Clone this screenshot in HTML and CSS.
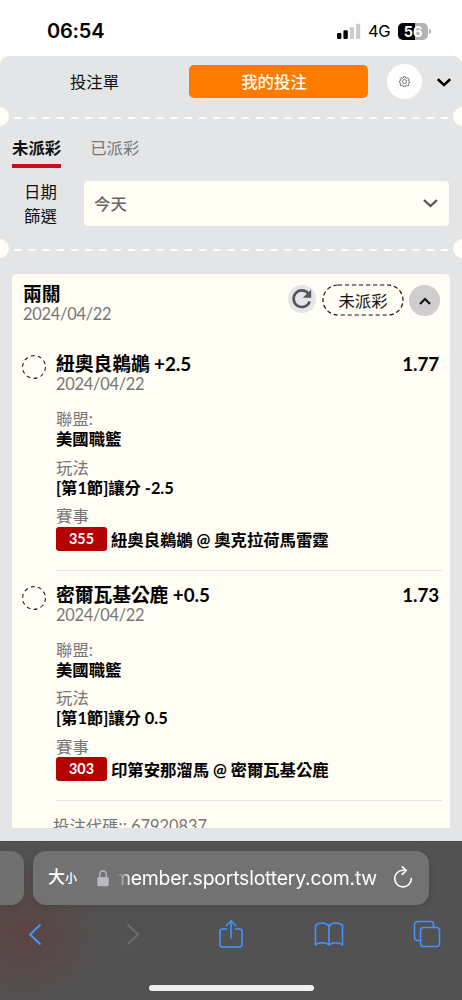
FILE: index.html
```html
<!DOCTYPE html>
<html lang="zh-Hant">
<head>
<meta charset="utf-8">
<title>我的投注</title>
<link rel="stylesheet" href="styles.css">
</head>
<body>
<div class="screen">
  <header class="status">
    <span class="clock">06:54</span>
    <div class="status-right">
      <svg class="signal" width="24" height="16" viewBox="0 0 24 16"><rect x="0" y="10" width="4.4" height="6" rx="1.2" fill="#000"/><rect x="6.4" y="7.3" width="4.4" height="8.7" rx="1.2" fill="#000"/><rect x="12.8" y="4" width="4.2" height="12" rx="1.2" fill="#ccc"/><rect x="19" y="0.8" width="4.2" height="15.2" rx="1.2" fill="#ccc"/></svg>
      <span class="network">4G</span>
      <div class="battery"><span class="battery-body"><b>5</b><b>6</b></span><i class="battery-tip"></i></div>
    </div>
  </header>

  <main class="page">
    <nav class="switcher">
      <span class="switch">投注單</span>
      <span class="switch switch-on">我的投注</span>
      <span class="gear"><svg width="11" height="11" viewBox="0 0 24 24" fill="none" stroke="#555" stroke-width="1.8"><circle cx="12" cy="12" r="4.3"/><path d="M10 1.500h4l.7 2.700 2 .9 2.700-1.700 2.300 2.300-1.700 2.700.9 2 2.600.7v3l-2.600.7-.9 2 1.700 2.700-2.300 2.300-2.700-1.700-2 .9-.7 2.600h-4l-.7-2.600-2-.9-2.700 1.700-2.300-2.300 1.700-2.700-.9-2-2.600-.7v-3l2.600-.7.9-2-1.700-2.700 2.300-2.300 2.700 1.700 2-.9z"/></svg></span>
      <svg class="collapse" width="14" height="9" viewBox="0 0 14 9" fill="none" stroke="#000" stroke-width="2.5"><path d="M.8 1.200 7 7l6.200-5.800"/></svg>
    </nav>

    <div class="perforation"><i></i><svg width="434" height="2" viewBox="0 0 434 2"><path d="M0 1h434" stroke="#fffdf4" stroke-width="2" stroke-dasharray="7.300 6.930"/></svg><i></i></div>

    <section class="filters">
      <div class="tabs"><span class="tab tab-on">未派彩</span><span class="tab">已派彩</span></div>
      <div class="date-filter">
        <label class="date-label">日期<br>篩選</label>
        <div class="select"><span>今天</span><svg width="15" height="9" viewBox="0 0 15 9" fill="none" stroke="#555" stroke-width="2.300"><path d="M1 1l6.500 6L14 1"/></svg></div>
      </div>
    </section>

    <div class="perforation"><i></i><svg width="434" height="2" viewBox="0 0 434 2"><path d="M0 1h434" stroke="#fffdf4" stroke-width="2" stroke-dasharray="7.300 6.930"/></svg><i></i></div>

    <article class="card">
      <div class="card-head">
        <div class="card-name"><h2 class="title">兩關</h2><p class="date">2024/04/22</p></div>
        <span class="refresh"><svg width="22" height="22" viewBox="0 0 22 22"><path d="M17.300 5.400A8.300 8.300 0 1 0 18.700 13.500" fill="none" stroke="#55565a" stroke-width="2.600"/><path d="M20.200 1.500v8.300h-8.300z" fill="#55565a"/></svg></span>
        <span class="pill"><svg width="82" height="32" viewBox="0 0 82 32"><rect x="1" y="1" width="80" height="30" rx="15" fill="none" stroke="#111" stroke-width="1.200" stroke-dasharray="4.200 2.800"/></svg><em>未派彩</em></span>
        <span class="toggle"><svg width="12" height="8" viewBox="0 0 12 8" fill="none" stroke="#111" stroke-width="2.200"><path d="M1 7l5-5 5 5"/></svg></span>
      </div>

      <section class="leg">
        <svg class="ring" width="24" height="24" viewBox="0 0 24 24"><circle cx="12" cy="12" r="11.400" fill="none" stroke="#222" stroke-width="1.100" stroke-dasharray="3.800 3.363"/></svg>
        <div class="leg-body">
          <div class="leg-head"><h3 class="title">紐奧良鵜鶘 +2.5</h3><b class="odds">1.77</b></div>
          <p class="date">2024/04/22</p>
          <dl class="facts">
            <div><dt>聯盟:</dt><dd>美國職籃</dd></div>
            <div><dt>玩法</dt><dd>[第1節]讓分 -2.5</dd></div>
            <div><dt>賽事</dt><dd class="match"><span class="code">355</span><span class="teams">紐奧良鵜鶘 @ 奧克拉荷馬雷霆</span></dd></div>
          </dl>
        </div>
      </section>

      <section class="leg">
        <svg class="ring" width="24" height="24" viewBox="0 0 24 24"><circle cx="12" cy="12" r="11.400" fill="none" stroke="#222" stroke-width="1.100" stroke-dasharray="3.800 3.363"/></svg>
        <div class="leg-body">
          <div class="leg-head"><h3 class="title">密爾瓦基公鹿 +0.5</h3><b class="odds">1.73</b></div>
          <p class="date">2024/04/22</p>
          <dl class="facts">
            <div><dt>聯盟:</dt><dd>美國職籃</dd></div>
            <div><dt>玩法</dt><dd>[第1節]讓分 0.5</dd></div>
            <div><dt>賽事</dt><dd class="match"><span class="code">303</span><span class="teams">印第安那溜馬 @ 密爾瓦基公鹿</span></dd></div>
          </dl>
        </div>
      </section>
      <p class="ticket">投注代碼:: 67920837</p>
    </article>
  </main>

  <footer class="browser">
    <div class="address-row">
      <div class="prev-tab"></div>
      <div class="address">
        <span class="text-size">大<small>小</small></span>
        <svg class="lock" width="12" height="17" viewBox="0 0 12 17"><rect x="0.300" y="7" width="11.400" height="9.300" rx="1.600" fill="#bab8bf"/><path d="M2.700 8V4.500a3.300 3.500 0 0 1 6.600 0V8" fill="none" stroke="#bab8bf" stroke-width="1.400"/></svg>
        <span class="url">member.sportslottery.com.tw</span>
        <svg class="reload" width="20" height="24" viewBox="0 0 20 24" fill="none" stroke="#fff" stroke-width="1.600" stroke-linecap="round" stroke-linejoin="round"><path d="M10.800 5.300H10a8.300 8.300 0 1 0 8.300 8.300M9.300 1.800l4 3.700-4 3.800"/></svg>
      </div>
    </div>
    <div class="tools">
      <svg width="14" height="23" viewBox="0 0 14 23" stroke="#4692ff" stroke-width="2"><path d="M12.500 1.500 2 11.500l10.500 10"/></svg>
      <svg width="14" height="23" viewBox="0 0 14 23" stroke="#747474" stroke-width="1.600"><path d="M1.500 1.500 12 11.500l-10.500 10"/></svg>
      <svg width="26" height="30" viewBox="0 0 26 30" stroke="#4692ff" stroke-width="1.600"><path d="M9 10H4.500A2.500 2.500 0 0 0 2 12.500v13A2.500 2.500 0 0 0 4.500 28h17a2.500 2.500 0 0 0 2.500-2.500v-13a2.500 2.500 0 0 0-2.500-2.500H17M13 19.500V2M7.800 7 13 1.800 18.200 7"/></svg>
      <svg width="30" height="26" viewBox="0 0 30 26" stroke="#4692ff" stroke-width="1.600" stroke-linejoin="round"><path d="M15 5C12 1 4.500 1 1.500 4.500V24C5 21 12 21 15 24c3-3 10-3 13.500 0V4.500C25.500 1 18 1 15 5zM15 5v19"/></svg>
      <svg width="28" height="28" viewBox="0 0 28 28" stroke="#4692ff" stroke-width="1.600"><path d="M7.500 20.500h-3A3 3 0 0 1 1.500 17.500V4.500a3 3 0 0 1 3-3h13a3 3 0 0 1 3 3v3"/><rect x="7.500" y="7.500" width="19" height="19" rx="3"/></svg>
    </div>
    <div class="home-bar"></div>
  </footer>
</div>
</body>
</html>
```
FILE: styles.css
```css
* { box-sizing: border-box; }
body, h2, h3, p, dl, dd { margin: 0; }
body {
  width: 462px;
  height: 1000px;
  overflow: hidden;
  background: #fff;
  font: 16.4px/20px Lato, "Noto Sans CJK TC", sans-serif;
  color: #111;
}
svg { display: block; flex: none; }
.screen { display: flex; flex-direction: column; height: 1000px; background: #fffdf4; }

.status {
  display: flex;
  justify-content: space-between;
  align-items: center;
  height: 56px;
  padding: 6px 31px 0 47px;
  background: #fff;
  font-family: Inter, sans-serif;
  color: #000;
}
.clock { font-size: 20px; font-weight: 600; letter-spacing: -.2px; }
.status-right { display: flex; align-items: center; }
.signal { margin-right: 7px; }
.network { width: 30px; font-size: 16.5px; font-weight: 400; letter-spacing: -.3px; }
.battery { display: flex; align-items: center; gap: 1px; }
.battery-body {
  display: flex;
  justify-content: center;
  align-items: center;
  width: 30px;
  height: 17px;
  border-radius: 5px;
  background: linear-gradient(90deg, #000 56%, #b3b3b3 56%);
  color: #fff;
  font-size: 14.5px;
  line-height: 17px;
}
.battery-tip { width: 2px; height: 5px; border-radius: 0 2px 2px 0; background: #b3b3b3; }

.page {
  height: 785px;
  overflow: hidden;
  border-radius: 9px 9px 0 0;
  background: #e3e5e7;
}
.switcher { display: flex; align-items: center; height: 51px; }
.switch { width: 189px; text-align: center; line-height: 33px; }
.switch-on { width: 179px; padding-right: 9px; border-radius: 5px; background: #ff7a00; color: #fffdf4; font-weight: 500; }
.gear {
  display: grid;
  place-items: center;
  width: 35px;
  height: 35px;
  margin-left: 19px;
  border-radius: 50%;
  background: #fff;
}
.collapse { margin: 1px 0 0 15px; }

.perforation { display: flex; align-items: center; justify-content: space-between; height: 19px; margin: 0 -10px; }
.perforation i { width: 19px; height: 19px; border-radius: 50%; background: #fffdf4; }
.perforation svg { margin-top: 2px; }

.filters { height: 113px; padding: 12px 13px 0 12px; }
.tabs { display: flex; gap: 29px; height: 30px; line-height: 20px; }
.tab { color: #777; }
.tab-on { height: 30px; border-bottom: 4px solid #c1121a; color: #111; font-weight: 700; }
.date-filter { display: flex; justify-content: space-between; align-items: center; height: 45px; margin-top: 13px; }
.date-label { width: 57px; line-height: 24px; text-align: center; }
.select {
  display: flex;
  justify-content: space-between;
  align-items: center;
  width: 365px;
  height: 45px;
  padding: 0 11px 0 10px;
  border-radius: 4px;
  background: #fffdf4;
  color: #666;
  font-weight: 500;
}

.card {
  width: 438px;
  height: 554px;
  margin: 16px 0 0 12px;
  padding: 0 8px 0 11px;
  overflow: hidden;
  border-radius: 5px 5px 0 0;
  background: #fffdf4;
}
.card-head { display: flex; height: 66px; padding: 9px 2px 0 0; }
.card-name { flex: 1; }
.title { font-size: 18.8px; line-height: 22px; font-weight: 700; letter-spacing: -.06px; color: #000; }
.date { line-height: 18px; letter-spacing: -.25px; color: #777; }
.refresh { display: grid; place-items: center; width: 28px; height: 28px; margin: 2px 6px 0 0; border-radius: 50%; background: #e3e5e7; }
.pill { display: grid; place-items: center; width: 82px; height: 32px; margin: 1px 5px 0 0; }
.pill > * { grid-area: 1 / 1; font-style: normal; }
.pill em { padding-top: 2px; }
.toggle { display: grid; place-items: center; width: 31px; height: 31px; margin-top: 2px; border-radius: 50%; background: #cecece; }

.leg { display: flex; height: 230.700px; padding-top: 13px; }
.ring { margin: 2px 9px 0 -1px; }
.leg-body { flex: 1; margin-left: 1px; border-bottom: 1.700px solid #e6e4df; }
.leg-head { display: flex; justify-content: space-between; padding-right: 3px; }
.odds { font-size: 18.8px; line-height: 22px; color: #000; letter-spacing: -.1px; }
.facts { display: grid; gap: 8.500px; margin-top: 16px; }
dt { color: #777; }
dd { color: #000; font-weight: 700; letter-spacing: -.06px; }
.match { display: flex; align-items: center; gap: 4px; height: 25px; white-space: nowrap; }
.teams { padding-top: 2px; }
.code { width: 51px; border-radius: 3px; background: #b50000; color: #fff; font-size: 14.4px; line-height: 24px; text-align: center; }
.ticket { margin: 15px 0 0 30px; color: #777; white-space: nowrap; }

.browser {
  height: 159px;
  border-top: 1px solid #4a4a4a;
  background: radial-gradient(ellipse 80px 75px at 25px 92px, #5c4444, rgba(92, 68, 68, 0)) #525252;
}
.address-row { display: flex; gap: 9px; height: 63px; padding-top: 9px; }
.prev-tab { width: 24px; height: 54px; border-radius: 0 13px 13px 0; background: #717070; box-shadow: 0 2px 9px rgba(0, 0, 0, .12); }
.address {
  display: flex;
  align-items: center;
  width: 396px;
  height: 54px;
  padding-left: 15px;
  border-radius: 13px;
  background: #727272;
  box-shadow: 0 2px 9px rgba(0, 0, 0, .12);
  color: #fff;
}
.text-size { width: 49px; font-size: 17px; font-weight: 500; white-space: nowrap; }
.text-size small { font-size: 12px; }
.url {
  display: flex;
  justify-content: flex-end;
  width: 260px;
  margin-left: 8px;
  overflow: hidden;
  font-family: Inter, sans-serif;
  font-size: 19.400px;
  line-height: 26px;
  letter-spacing: -.2px;
  mask-image: linear-gradient(90deg, transparent, #000 14px);
}
.reload { margin: -2px 0 0 16px; }
.tools {
  display: grid;
  grid-template-columns: repeat(5, 98px);
  place-items: center;
  height: 58px;
  margin: 0 -14px;
  fill: none;
}
.home-bar { width: 165px; height: 6px; margin: 22px auto 0; border-radius: 3px; background: #efefef; }
```
